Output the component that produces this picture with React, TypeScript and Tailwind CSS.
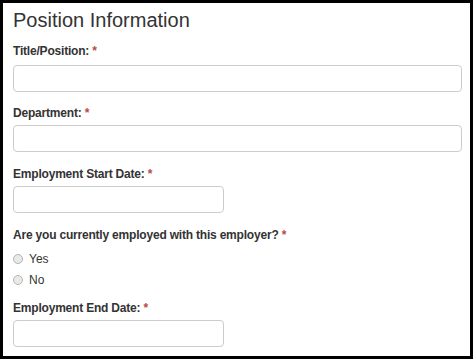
import React from 'react';

// Required field label with red asterisk
function FieldLabel({ text, mb = 'mb-[3px]' }: { text: string; mb?: string }) {
  return (
    <label className={`block text-[12px] leading-[17px] font-bold text-[#333] tracking-[-0.2px] ${mb}`}>
      {text} <span className="text-[#b94a48]">*</span>
    </label>
  );
}

function TextInput({ narrow = false }: { narrow?: boolean }) {
  return (
    <input
      type="text"
      className={
        narrow
          ? 'block w-[211px] h-[27px] border border-[#ccc] rounded-[4px] bg-white px-2 text-[12px] outline-none'
          : 'block w-full h-[27px] border border-[#ccc] rounded-[4px] bg-white px-2 text-[12px] outline-none'
      }
    />
  );
}

function Radio({ label }: { label: string }) {
  return (
    <div className="flex items-center h-[21px]">
      <span className="w-[10px] h-[10px] rounded-full border border-[#b4b4b4] bg-[#e9e9e9] shrink-0" />
      <span className="ml-[6px] text-[12px] text-[#333]">{label}</span>
    </div>
  );
}

export default function App() {
  return (
    <div
      className="w-[473px] h-[359px] border-[3px] border-black bg-white pl-[10px] pr-[8px] pt-[6px] overflow-hidden"
      style={{ fontFamily: '"Liberation Sans", Arial, sans-serif' }}
    >
      <h2 className="text-[20px] leading-[22px] text-[#333] mb-[12px]">Position Information</h2>

      <div className="mb-[13px]">
        <FieldLabel text="Title/Position:" mb="mb-[5px]" />
        <TextInput />
      </div>

      <div className="mb-[14px]">
        <FieldLabel text="Department:" />
        <TextInput />
      </div>

      <div className="mb-[14px]">
        <FieldLabel text="Employment Start Date:" />
        <TextInput narrow />
      </div>

      <div className="mb-[10px]">
        <FieldLabel text="Are you currently employed with this employer?" mb="mb-[4px]" />
        <Radio label="Yes" />
        <Radio label="No" />
      </div>

      <div>
        <FieldLabel text="Employment End Date:" />
        <TextInput narrow />
      </div>
    </div>
  );
}
